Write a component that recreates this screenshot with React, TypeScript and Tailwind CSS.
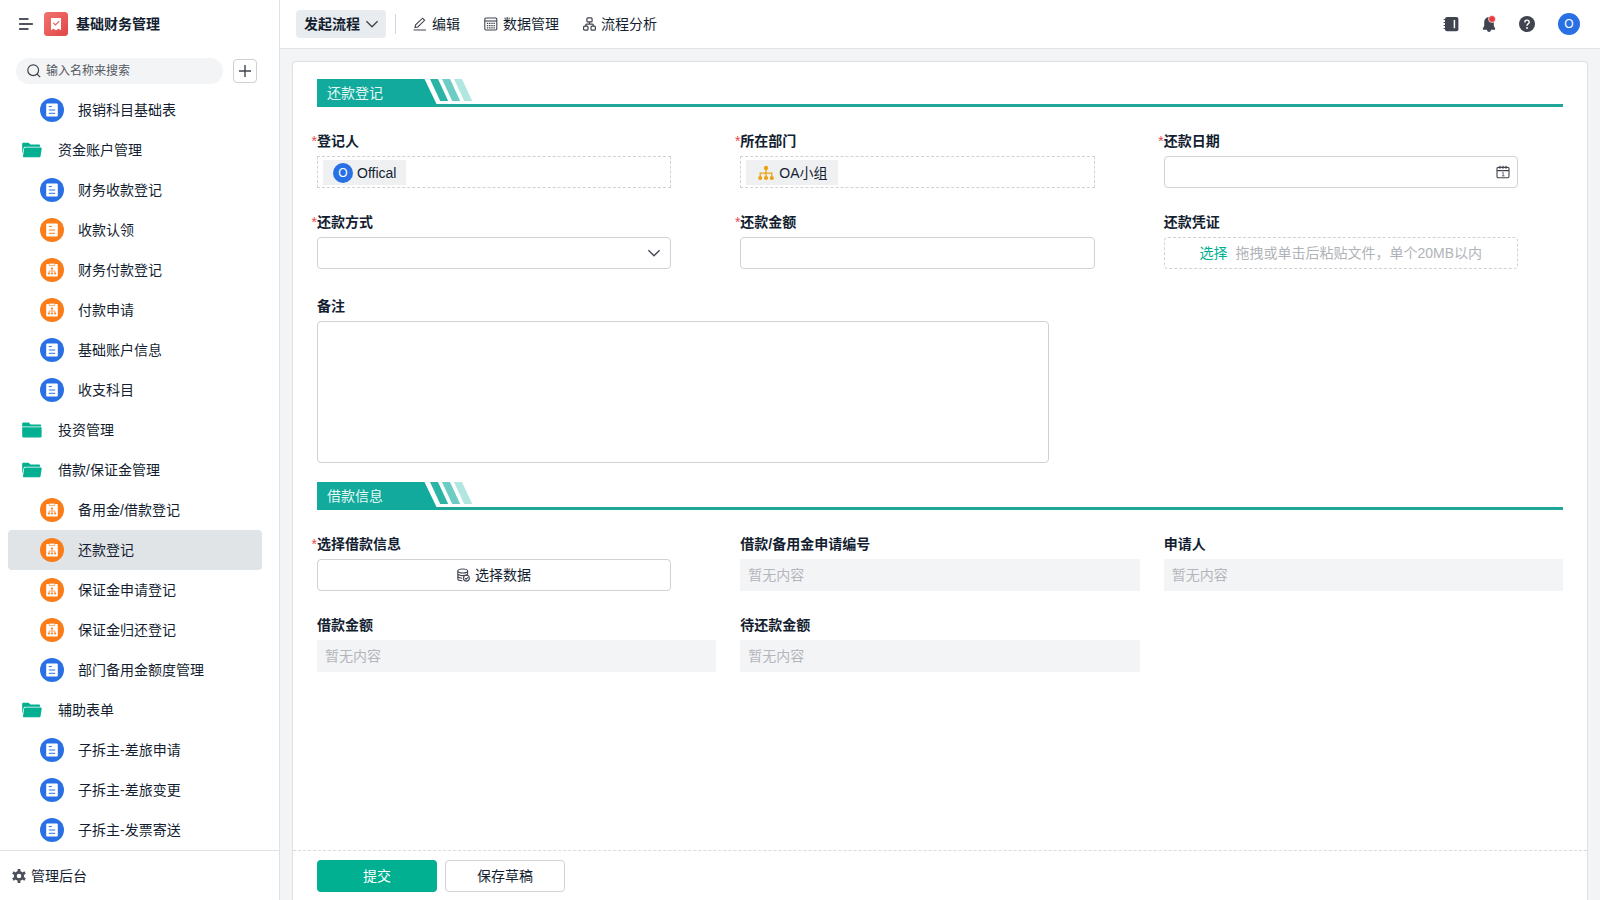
import type { ReactNode } from "react";

type Kind = "folder" | "folder-open" | "form" | "form-orange" | "flow";

const menu: { label: string; kind: Kind; active?: boolean }[] = [
  { label: "报销科目基础表", kind: "form" },
  { label: "资金账户管理", kind: "folder-open" },
  { label: "财务收款登记", kind: "form" },
  { label: "收款认领", kind: "form-orange" },
  { label: "财务付款登记", kind: "flow" },
  { label: "付款申请", kind: "flow" },
  { label: "基础账户信息", kind: "form" },
  { label: "收支科目", kind: "form" },
  { label: "投资管理", kind: "folder" },
  { label: "借款/保证金管理", kind: "folder-open" },
  { label: "备用金/借款登记", kind: "flow" },
  { label: "还款登记", kind: "flow", active: true },
  { label: "保证金申请登记", kind: "flow" },
  { label: "保证金归还登记", kind: "flow" },
  { label: "部门备用金额度管理", kind: "form" },
  { label: "辅助表单", kind: "folder-open" },
  { label: "子拆主-差旅申请", kind: "form" },
  { label: "子拆主-差旅变更", kind: "form" },
  { label: "子拆主-发票寄送", kind: "form" },
];

function FolderIcon({ open }: { open?: boolean }) {
  return (
    <svg width="20" height="16" viewBox="0 0 20 16" className="shrink-0" fill="#00b090">
      {open ? (
        <>
          <path d="M0.2 12V1.8Q0.2 0.8 1.2 0.8H6.6L8.4 2.6H17Q18 2.6 18 3.6V4.8H3Q1.9 4.8 1.7 5.8Z" />
          <path d="M3.2 5.4H18.9Q19.9 5.4 19.7 6.4L18.6 14Q18.4 15.2 17.2 15.2H1.6Q0.8 15.2 1 14.2L2.2 6.2Q2.4 5.4 3.2 5.4Z" />
        </>
      ) : (
        <>
          <path d="M0.2 4.5V1.6Q0.2 0.6 1.2 0.6H6.8L8.6 2.4H18Q19.2 2.4 19.2 3.6V4.5Z" />
          <path d="M0.2 5.3H19.6V14Q19.6 15.5 18.2 15.5H1.6Q0.2 15.5 0.2 14Z" />
        </>
      )}
    </svg>
  );
}

function FormIcon({ color }: { color: string }) {
  return (
    <svg width="24" height="24" viewBox="0 0 24 24" className="shrink-0">
      <circle cx="12" cy="12" r="12" fill={color} />
      <rect x="6.2" y="5.4" width="11.6" height="13.2" rx="1" fill="#fff" />
      <path d="M8.8 8.6h3M8.8 12h6.4M8.8 15.3h6.4" stroke={color} strokeWidth="1" />
    </svg>
  );
}

function FlowIcon() {
  return (
    <svg width="24" height="24" viewBox="0 0 24 24" className="shrink-0">
      <circle cx="12" cy="12" r="12" fill="#fa7d19" />
      <rect x="6.2" y="6" width="11.6" height="12.6" rx="1" fill="#fff" />
      <path d="M9.2 5.3h5.6v2.2H9.2Z" fill="#fff" stroke="#fa7d19" strokeWidth="0.6" />
      <circle cx="12" cy="10.5" r="1.1" fill="#fa7d19" />
      <path d="M12 10.5v4.8M9 15v-2h6v2" fill="none" stroke="#fa7d19" strokeWidth="0.6" />
      <circle cx="9" cy="15.4" r="1" fill="#fa7d19" />
      <circle cx="12" cy="15.4" r="1" fill="#fa7d19" />
      <circle cx="15" cy="15.4" r="1" fill="#fa7d19" />
    </svg>
  );
}

function MenuIcon({ kind }: { kind: Kind }) {
  if (kind === "flow") return <FlowIcon />;
  if (kind === "form") return <FormIcon color="#2a70e5" />;
  if (kind === "form-orange") return <FormIcon color="#fa7d19" />;
  return <FolderIcon open={kind === "folder-open"} />;
}

function Chevron() {
  return (
    <svg width="14" height="14" viewBox="0 0 14 14" fill="none" stroke="#40444e" strokeWidth="1.3">
      <path d="M1.4 4.2L7 9.8L12.6 4.2" />
    </svg>
  );
}

function Sidebar() {
  return (
    <aside className="flex w-70 shrink-0 flex-col border-r border-[#dfe1e5] bg-white">
      <div className="flex h-12 shrink-0 items-center pl-4.5">
        <button aria-label="收起菜单">
          <svg width="16" height="14" viewBox="0 0 16 14" stroke="#50545e" strokeWidth="1.9" strokeLinecap="round">
            <path d="M1.8 2h8M1.8 7h12.4M1.8 12h8" />
          </svg>
        </button>
        <svg width="24" height="24" viewBox="0 0 24 24" className="ml-2.5">
          <defs>
            <linearGradient id="logo" x1="0" y1="0" x2="1" y2="1">
              <stop offset="0" stopColor="#f17370" />
              <stop offset="1" stopColor="#e04746" />
            </linearGradient>
          </defs>
          <rect width="24" height="24" rx="3.5" fill="url(#logo)" />
          <path d="M7 6h10v12.3l-2.4-1.5-2.6 1.5-2.6-1.5L7 18.3Z" fill="#fff" />
          <path d="M9.2 10.9l2.2 2.1 3.8-3.8" fill="none" stroke="#e85a58" strokeWidth="1.1" />
        </svg>
        <h1 className="ml-2 text-sm font-bold">基础财务管理</h1>
      </div>

      <div className="flex h-[42px] shrink-0 items-start justify-between pt-2.5 pr-[22px] pl-4">
        <label className="flex h-[26px] w-[207px] items-center gap-[5px] rounded-full bg-[#f3f4f5] pl-[11px]">
          <svg width="14" height="14" viewBox="0 0 14 14" fill="none" stroke="#40444e" strokeWidth="1.2">
            <circle cx="6.2" cy="6.2" r="5.4" />
            <path d="M10 10l3.2 3.2" />
          </svg>
          <input
            type="text"
            aria-label="搜索"
            placeholder="输入名称来搜索"
            className="w-40 bg-transparent text-xs outline-none placeholder:text-[#555a64]"
          />
        </label>
        <button aria-label="新建" className="mt-px flex size-6 items-center justify-center rounded border border-[#ced1d6]">
          <svg width="12" height="12" viewBox="0 0 12 12" stroke="#40444e" strokeWidth="1.4">
            <path d="M6 0v12M0 6h12" />
          </svg>
        </button>
      </div>

      <nav className="min-h-0 flex-1 overflow-hidden pr-[17px] pl-2">
        {menu.map((item) => (
          <a
            key={item.label}
            href="#"
            className={`flex h-10 items-center rounded ${item.active ? "bg-[#e1e4e7]" : ""} ${
              item.kind.startsWith("folder") ? "gap-4 pl-3.5" : "gap-3.5 pl-8"
            }`}
          >
            <MenuIcon kind={item.kind} />
            <span>{item.label}</span>
          </a>
        ))}
      </nav>

      <a href="#" className="flex h-[50px] shrink-0 items-center gap-[5px] border-t border-[#dfe1e5] pl-3">
        <svg width="14" height="14" viewBox="0 0 14 14" fill="none" stroke="#4a4f59">
          <circle cx="7" cy="7" r="3.7" strokeWidth="2.8" />
          <path
            d="M7 0v2.4M7 11.6V14M0.9 3.5l2.1 1.2M11 9.3l2.1 1.2M0.9 10.5L3 9.3M11 4.7l2.1-1.2"
            strokeWidth="2.8"
          />
        </svg>
        <span>管理后台</span>
      </a>
    </aside>
  );
}

function TopBar() {
  return (
    <header className="flex h-[49px] shrink-0 items-center border-b border-[#e2e4e7] bg-white pr-5 pl-4">
      <button className="flex h-7 items-center gap-[5px] rounded bg-[#e9ecee] pr-[7px] pl-2 font-bold">
        发起流程
        <Chevron />
      </button>
      <div className="mx-[9px] h-5 w-px bg-[#d3d6da]" />
      <nav className="ml-2 flex items-center gap-6">
        <a href="#" className="flex items-center gap-[5px]">
          <svg width="14" height="14" viewBox="0 0 14 14" fill="none" stroke="#40444e" strokeWidth="1.1">
            <path d="M2 10.6l.6-2.8 7-6.6 2 2.1-6.8 6.7ZM0.6 13h12.4" />
          </svg>
          编辑
        </a>
        <a href="#" className="flex items-center gap-[5px]">
          <svg width="14" height="14" viewBox="0 0 14 14" fill="none" stroke="#40444e" strokeWidth="1.1">
            <rect x="0.8" y="1" width="12" height="12" rx="1.2" />
            <path d="M0.8 4h12" />
            <path d="M2.9 6.4h8.2M2.9 8.6h8.2M2.9 10.8h8.2" strokeDasharray="1.4 0.8" strokeWidth="1.2" />
          </svg>
          数据管理
        </a>
        <a href="#" className="flex items-center gap-[5px]">
          <svg width="13" height="14" viewBox="0 0 13 14" fill="none" stroke="#40444e" strokeWidth="1.2">
            <rect x="3.9" y="0.9" width="5.2" height="4" rx="1" />
            <rect x="0.6" y="9.2" width="4.4" height="4" rx="1" />
            <rect x="8" y="9.2" width="4.4" height="4" rx="1" />
            <path d="M6.5 5v2.2M2.7 9.2V8q0-.9.9-.9h5.8q.9 0 .9.9v1.2" />
          </svg>
          流程分析
        </a>
      </nav>
      <div className="ml-auto flex items-center">
        <button aria-label="通讯录">
          <svg width="16" height="16" viewBox="0 0 16 16" fill="#40444e">
            <rect x="2" y="1" width="13.4" height="14.2" rx="2" />
            <path d="M0.6 3.6h2.6M0.6 6.5h2.6M0.6 9.5h2.6M0.6 12.4h2.6" stroke="#40444e" strokeWidth="1" />
            <path d="M11.4 4v8.2" stroke="#fff" strokeWidth="1.5" />
          </svg>
        </button>
        <button aria-label="通知" className="ml-[22px]">
          <svg width="16" height="18" viewBox="0 0 16 18" fill="#40444e">
            <path d="M8 2Q3.2 2.6 3.2 7.4V11L1.9 13.2V14.8H5.8Q6.4 17 8 17Q9.6 17 10.2 14.8H14.1V13.2L12.8 11V7.4Q12.8 2.6 8 2Z" />
            <circle cx="11" cy="4" r="3.5" fill="#e63c3f" stroke="#fff" strokeWidth="0.7" />
          </svg>
        </button>
        <button aria-label="帮助" className="ml-[22px]">
          <svg width="16" height="16" viewBox="0 0 16 16">
            <circle cx="8" cy="8" r="8" fill="#40444e" />
            <path d="M5.8 6.4Q5.8 4.1 8 4.1T10.2 6.2Q10.2 7.2 9.1 7.9Q8 8.6 8 9.8" fill="none" stroke="#fff" strokeWidth="1.4" />
            <circle cx="8" cy="12" r="0.95" fill="#fff" />
          </svg>
        </button>
        <button className="ml-[23px] flex size-[22px] items-center justify-center rounded-full bg-[#2a70e5] text-xs text-white">
          O
        </button>
      </div>
    </header>
  );
}

function SectionTitle({ children }: { children: ReactNode }) {
  return (
    <div className="relative flex h-7 items-center border-b-3 border-[#1fa698]">
      <svg width="156" height="28" viewBox="0 0 156 28" className="absolute top-0 left-0">
        <path d="M0 0h107.5L119.5 25V28H0Z" fill="#12aa9c" />
        <path d="M113 0h8l10.2 22h-8Z" fill="#2bb3a6" />
        <path d="M125 0h8l10.2 22h-8Z" fill="#6dcdc4" />
        <path d="M137 0h8l10.2 22h-8Z" fill="#b2e6e0" />
      </svg>
      <h2 className="relative pt-[3px] pl-2.5 text-[#e6f8f5]">{children}</h2>
    </div>
  );
}

type FieldProps = { label: string; id?: string; required?: boolean; className?: string; children: ReactNode };

function Field({ label, id, required, className = "", children }: FieldProps) {
  return (
    <div className={`flex flex-col gap-1 ${className}`}>
      <label htmlFor={id} className="relative w-fit leading-[22px] font-bold">
        {required && <span className="absolute top-0 right-full font-normal text-[#e5484d]">*</span>}
        {label}
      </label>
      {children}
    </div>
  );
}

function EmptyField({ label, id }: { label: string; id: string }) {
  return (
    <Field label={label} id={id}>
      <input
        id={id}
        readOnly
        placeholder="暂无内容"
        className="h-8 w-full bg-[#f3f4f6] px-2 outline-none placeholder:text-[#b3b6bb]"
      />
    </Field>
  );
}

function Form() {
  return (
    <form className="flex min-h-0 flex-1 flex-col rounded-t border border-b-0 border-[#dcdfe3] bg-white">
      <div className="min-h-0 flex-1 overflow-hidden px-6 pt-[17px]">
        <SectionTitle>还款登记</SectionTitle>
        <div className="mt-[23px] grid grid-cols-3 gap-x-6 gap-y-[23px]">
          <Field label="登记人" required>
            <div className="flex h-8 w-[88.7%] items-start border border-dashed border-[#cfd2d6] px-[5px] pt-[3px]">
              <span className="flex h-[25px] items-center gap-1 bg-[#eff0f2] px-2.5">
                <span className="flex size-5 items-center justify-center rounded-full bg-[#2a70e5] text-xs text-white">
                  O
                </span>
                Offical
              </span>
            </div>
          </Field>
          <Field label="所在部门" required>
            <div className="flex h-8 w-[88.7%] items-start border border-dashed border-[#cfd2d6] px-[5px] pt-[3px]">
              <span className="flex h-[25px] items-center gap-[5px] bg-[#eff0f2] pr-2.5 pl-3">
                <svg width="16" height="16" viewBox="0 0 16 16" fill="#eba213">
                  <circle cx="8" cy="3" r="2.2" />
                  <circle cx="2.2" cy="13" r="2.1" />
                  <circle cx="8" cy="13" r="2.1" />
                  <circle cx="13.8" cy="13" r="2.1" />
                  <path d="M8 3v10M2.2 13V8.2h11.6V13" fill="none" stroke="#eba213" strokeWidth="1.3" />
                </svg>
                OA小组
              </span>
            </div>
          </Field>
          <Field label="还款日期" id="date" required>
            <div className="relative w-[88.7%]">
              <input id="date" type="text" className="h-8 w-full rounded border border-[#cfd2d6] px-2 outline-none" />
              <svg
                width="14"
                height="14"
                viewBox="0 0 14 14"
                fill="none"
                stroke="#40444e"
                strokeWidth="1.1"
                className="absolute top-[9px] right-2"
              >
                <rect x="1" y="2.4" width="12" height="10.4" rx="1.2" />
                <path d="M1 5.6h12M4 0.8v3M7 0.8v3M10 0.8v3" />
                <path d="M6 8.1l1.2-.8v3.6M5.8 10.9h2.8" strokeWidth="0.7" />
              </svg>
            </div>
          </Field>
          <Field label="还款方式" id="method" required>
            <div className="relative w-[88.7%]">
              <select
                id="method"
                className="block h-8 w-full appearance-none rounded border border-[#cfd2d6] bg-white px-2 outline-none"
              >
                <option value=""></option>
              </select>
              <span className="pointer-events-none absolute top-[9px] right-2.5">
                <Chevron />
              </span>
            </div>
          </Field>
          <Field label="还款金额" id="amount" required>
            <input id="amount" type="text" className="h-8 w-[88.7%] rounded border border-[#cfd2d6] px-2 outline-none" />
          </Field>
          <Field label="还款凭证" id="voucher">
            <div className="flex h-8 w-[88.7%] items-center justify-center gap-2 rounded border border-dashed border-[#cfd2d6]">
              <button id="voucher" type="button" className="text-[#00b090]">
                选择
              </button>
              <span className="text-[#b0b3b8]">拖拽或单击后粘贴文件，单个20MB以内</span>
            </div>
          </Field>
          <Field label="备注" id="remark" className="col-span-2 pt-[3px]">
            <textarea
              id="remark"
              className="block h-[142px] w-[89%] resize-none rounded border border-[#cfd2d6] p-2 outline-none"
            />
          </Field>
        </div>

        <div className="mt-[19px]">
          <SectionTitle>借款信息</SectionTitle>
        </div>
        <div className="mt-[23px] grid grid-cols-3 gap-x-6 gap-y-[23px]">
          <Field label="选择借款信息" id="pick" required>
            <button
              id="pick"
              type="button"
              className="flex h-8 w-[88.7%] items-center justify-center gap-[5px] rounded border border-[#cfd2d6]"
            >
              <svg width="13" height="14" viewBox="0 0 13 14" fill="none" stroke="#40444e" strokeWidth="1.1">
                <ellipse cx="5.7" cy="3" rx="4.9" ry="2" />
                <path d="M0.8 3v8q0 1.6 4.6 1.8M10.6 3v3.6M0.8 5.8q.8 1.8 4.9 1.8 3.4 0 4.7-1.2M0.8 8.6q.8 1.6 4.4 1.6" />
                <circle cx="9.4" cy="10.2" r="2.9" />
                <path d="M8 10.2l1.1 1.1 1.9-1.9" />
              </svg>
              选择数据
            </button>
          </Field>
          <EmptyField label="借款/备用金申请编号" id="loan-no" />
          <EmptyField label="申请人" id="applicant" />
          <EmptyField label="借款金额" id="loan-amount" />
          <EmptyField label="待还款金额" id="unpaid" />
        </div>
      </div>

      <div className="flex h-[50px] shrink-0 items-start gap-2 border-t border-dashed border-[#d9dcdf] px-6 pt-[9px]">
        <button type="submit" className="h-8 w-30 rounded bg-[#00b090] text-white">
          提交
        </button>
        <button type="button" className="h-8 w-30 rounded border border-[#cfd2d6]">
          保存草稿
        </button>
      </div>
    </form>
  );
}

export default function App() {
  return (
    <div className="flex h-screen overflow-hidden bg-[#f2f4f6] font-['Liberation_Sans','Noto_Sans_CJK_SC',sans-serif] text-sm text-[#141e31]">
      <Sidebar />
      <div className="flex min-w-0 flex-1 flex-col">
        <TopBar />
        <main className="flex min-h-0 flex-1 flex-col px-3 pt-3">
          <Form />
        </main>
      </div>
    </div>
  );
}
